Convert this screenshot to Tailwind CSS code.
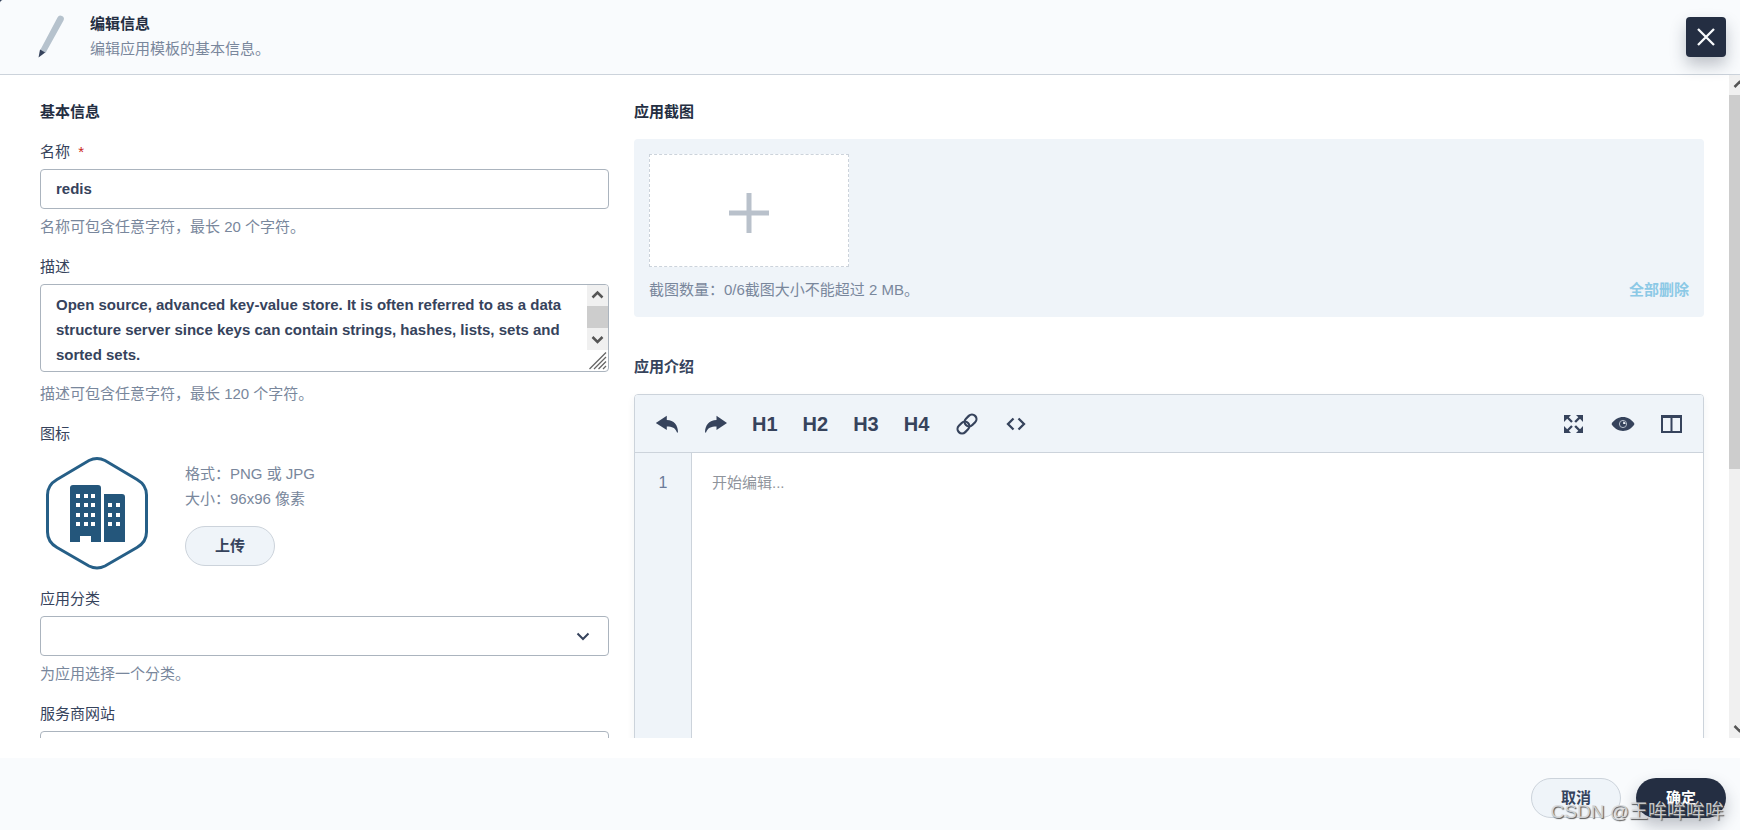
<!DOCTYPE html>
<html lang="zh-CN">
<head>
<meta charset="utf-8">
<meta name="viewport" content="width=device-width, initial-scale=1">
<title>编辑信息</title>
<script src="https://cdn.jsdelivr.net/npm/@tailwindcss/browser@4"></script>
</head>
<body class="bg-[#36435c]">
<div class="relative flex h-screen flex-col overflow-hidden rounded-tl-sm bg-white font-['Liberation_Sans','Noto_Sans_CJK_SC',sans-serif] text-[15px] leading-[25px] text-[#36435c]">

  <header class="z-10 flex shrink-0 items-center justify-between border-b border-[#ccd3db] bg-[#f9fbfd] pt-[11px] pb-[11px] pr-[14px] pl-[30px]">
    <div class="flex items-center gap-[10px]">
      <svg class="size-[50px]" viewBox="0 0 50 50" aria-hidden="true">
        <path d="M27.500 5.500A3 3 0 0 1 33.500 8.500L15.500 41L10 38.500Z" fill="#b6c2cd"/>
        <path d="M10 37.500L15.200 40.500L8.500 45.500Z" fill="#36435c"/>
      </svg>
      <div class="pb-0.5">
        <h1 class="font-bold text-[#242e42]">编辑信息</h1>
        <p class="text-[#79879c]">编辑应用模板的基本信息。</p>
      </div>
    </div>
    <button type="button" aria-label="关闭" class="flex size-10 items-center justify-center rounded bg-[#242e42] shadow-[0_8px_16px_0_rgba(35,45,65,0.28)]">
      <svg class="size-5" viewBox="0 0 20 20" fill="none" stroke="#f9fbfd" stroke-width="2.300" aria-hidden="true"><path d="M2 2L18 18M18 2L2 18"/></svg>
    </button>
  </header>

  <main class="relative mb-5 flex min-h-0 flex-1 gap-[25px] overflow-hidden pt-6 pr-9 pl-10">
    <section class="flex w-[569px] shrink-0 flex-col">
      <h2 class="mb-[15px] font-bold text-[#242e42]">基本信息</h2>

      <div class="mb-[15px] flex flex-col">
        <label for="name" class="mb-[5px]">名称 <span class="ml-1 text-[#ca2621]">*</span></label>
        <input id="name" type="text" value="redis" class="h-10 rounded border border-[#abb4be] bg-white px-[15px] pb-0.5 font-bold">
        <p class="mt-[5px] text-[#79879c]">名称可包含任意字符，最长 20 个字符。</p>
      </div>

      <div class="mb-[15px] flex flex-col">
        <label for="desc" class="mb-[5px]">描述</label>
        <div class="relative flex">
          <textarea id="desc" class="h-[88px] w-full resize-none overflow-hidden rounded border border-[#abb4be] bg-white py-[7px] pr-9 pl-[15px] font-bold">Open source, advanced key-value store. It is often referred to as a data structure server since keys can contain strings, hashes, lists, sets and sorted sets.</textarea>
          <svg class="absolute top-px right-px h-[86px] w-[21px]" viewBox="0 0 21 86" fill="none" aria-hidden="true">
            <path d="M0 0H18Q21 0 21 3V65H0Z" fill="#f0f0f0"/>
            <path d="M0 21H21V43H0Z" fill="#cdcdcd"/>
            <path d="M5.500 12.500L10.500 7.500L15.500 12.500M5.500 52L10.500 57L15.500 52" stroke="#555" stroke-width="2.500"/>
            <path d="M2.500 84L19 67.500M7 84L19 72M11.500 84L19 76.500M16 84L19 81" stroke="#666" stroke-width="1.300"/>
          </svg>
        </div>
        <p class="mt-[9px] text-[#79879c]">描述可包含任意字符，最长 120 个字符。</p>
      </div>

      <div class="mb-[10px] flex flex-col">
        <p class="mb-[5px]">图标</p>
        <div class="flex items-start gap-[30px]">
          <svg class="h-[125px] w-[115px]" viewBox="0 0 115 125" aria-hidden="true">
            <path d="M49 9.500Q57 5.500 65 9.500L97 28.500Q106.500 34 106.500 44V81Q106.500 91 97 96.500L65 115Q57 119 49 115L17 96.500Q7.500 91 7.500 81V44Q7.500 34 17 28.500Z" fill="none" stroke="#265f87" stroke-width="3"/>
            <g transform="translate(0 1)">
              <path d="M30 36Q30 33 33 33H58Q61 33 61 36V90H51V84H40V90H30ZM64 42H82Q85 42 85 45V90H64Z" fill="#24567b"/>
              <path d="M36 42h4v4h-4zM44 42h4v4h-4zM51 42h4v4h-4zM36 51h4v4h-4zM44 51h4v4h-4zM51 51h4v4h-4zM36 61h4v4h-4zM44 61h4v4h-4zM51 61h4v4h-4zM36 70h4v4h-4zM44 70h4v4h-4zM51 70h4v4h-4zM68 51h4v4h-4zM76 51h4v4h-4zM68 61h4v4h-4zM76 61h4v4h-4zM68 70h4v4h-4zM76 70h4v4h-4z" fill="#fff"/>
            </g>
          </svg>
          <div class="flex flex-col items-start pt-[10px]">
            <p class="text-[#79879c]">格式：PNG 或 JPG</p>
            <p class="text-[#79879c]">大小：96x96 像素</p>
            <button type="button" class="mt-[15px] h-10 w-[90px] rounded-full border border-[#ccd3db] bg-[#eff4f9] pb-0.5 font-bold">上传</button>
          </div>
        </div>
      </div>

      <div class="mb-[15px] flex flex-col">
        <label for="category" class="mb-[5px]">应用分类</label>
        <div class="relative flex">
          <select id="category" class="h-10 w-full appearance-none rounded border border-[#abb4be] bg-white px-[15px]"><option></option></select>
          <svg class="pointer-events-none absolute top-[10px] right-4 size-5" viewBox="0 0 20 20" fill="none" stroke="#36435c" stroke-width="2" aria-hidden="true"><path d="M4.500 7.500L10 13L15.500 7.500"/></svg>
        </div>
        <p class="mt-[5px] text-[#79879c]">为应用选择一个分类。</p>
      </div>

      <div class="flex flex-col">
        <label for="site" class="mb-[5px]">服务商网站</label>
        <input id="site" type="text" class="h-10 shrink-0 rounded border border-[#abb4be] bg-white px-[15px]">
      </div>
    </section>

    <section class="flex min-w-0 flex-1 flex-col">
      <h2 class="mb-[15px] font-bold text-[#242e42]">应用截图</h2>
      <div class="rounded bg-[#eff4f9] p-[15px]">
        <button type="button" aria-label="添加截图" class="flex h-[113px] w-[200px] items-center justify-center border border-dashed border-[#ccd3db] bg-white">
          <svg class="mt-1 size-10" viewBox="0 0 40 40" stroke="#b9c1cb" stroke-width="5" aria-hidden="true"><path d="M20 0V40M0 20H40"/></svg>
        </button>
        <div class="mt-[10px] flex items-center justify-between">
          <p class="text-[#79879c]">截图数量：0/6截图大小不能超过 2 MB。</p>
          <button type="button" class="font-bold text-[#8cc9e6]">全部删除</button>
        </div>
      </div>

      <h2 class="mt-[37px] mb-[15px] font-bold">应用介绍</h2>
      <div class="flex h-[500px] shrink-0 flex-col overflow-hidden rounded border border-[#ccd3db] shadow-[0_4px_8px_0_rgba(36,46,66,0.06)]">
        <div class="flex h-[58px] shrink-0 items-center justify-between border-b border-[#ccd3db] bg-[#eff4f9] px-[19px] text-xl font-bold">
          <div class="flex items-center gap-[25px]">
            <button type="button" aria-label="撤销"><svg class="size-6" viewBox="0 0 24 24" fill="#36435c" aria-hidden="true"><path d="M1.800 11L12.800 3.800V8C20 8 24 13 24 20.500H23C21.500 16 18 14.500 12.800 14.500V18Z"/></svg></button>
            <button type="button" aria-label="重做"><svg class="size-6" viewBox="0 0 24 24" fill="#36435c" aria-hidden="true"><path d="M24 11L13.500 3.800V8C6.300 8 2 13 2 20.500H3C4.500 16 8 14.500 13.500 14.500V18Z"/></svg></button>
            <button type="button">H1</button>
            <button type="button">H2</button>
            <button type="button">H3</button>
            <button type="button">H4</button>
            <button type="button" aria-label="链接"><svg class="size-6" viewBox="0 0 24 24" fill="none" stroke="#36435c" stroke-width="2.200" aria-hidden="true"><g transform="rotate(-45 13 12)"><rect x="1.500" y="7.500" width="13" height="9" rx="4.500"/><rect x="11.500" y="7.500" width="13" height="9" rx="4.500"/></g></svg></button>
            <button type="button" aria-label="代码"><svg class="size-6" viewBox="0 0 24 24" fill="none" stroke="#36435c" stroke-width="2.300" aria-hidden="true"><path d="M10.500 6.500L5 12L10.500 17.500M15.500 6.500L21 12L15.500 17.500"/></svg></button>
          </div>
          <div class="flex items-center gap-[25px]">
            <button type="button" aria-label="全屏"><svg class="size-6" viewBox="0 0 24 24" fill="#36435c" aria-hidden="true"><path d="M2 3H9L6.800 5.200L10.800 9.200L9.200 10.800L5.200 6.800L2 10ZM21 3V10L18 6.800L14 10.800L12.300 9.200L16.300 5.200L14 3ZM2 21V14L5.200 17.200L9.200 13.200L10.800 14.800L6.800 18.800L9 21ZM21 21H14L16.300 18.800L12.300 14.800L14 13.200L18 17.200L21 14Z"/></svg></button>
            <button type="button" aria-label="预览"><svg class="size-6" viewBox="0 0 24 24" aria-hidden="true"><path d="M.5 12C6 2.700 18 2.700 23.500 12C18 21.300 6 21.300 .5 12Z" fill="#36435c"/><circle cx="12" cy="12" r="3.600" fill="none" stroke="#b4bdc9" stroke-width="1"/><path d="M12.200 9.500A2.600 2.600 0 0 1 14.600 12H12.200Z" fill="#eff4f9"/></svg></button>
            <button type="button" aria-label="分栏"><svg class="size-6" viewBox="0 0 24 24" fill="none" stroke="#36435c" stroke-width="2" aria-hidden="true"><path d="M2 4V20H21V4M11.500 5V20"/><path d="M1 4.500H22" stroke-width="3"/></svg></button>
          </div>
        </div>
        <div class="flex flex-1">
          <div class="w-[57px] shrink-0 border-r border-[#ccd3db] bg-[#eff4f9] pt-[17px] text-center text-base leading-[25px] text-[#6b7a99]">1</div>
          <textarea aria-label="应用介绍" placeholder="开始编辑..." class="min-w-0 flex-1 resize-none bg-white px-5 pt-[17px] placeholder:text-[#8f949c]"></textarea>
        </div>
      </div>
    </section>

    <div class="absolute top-0 right-0 flex h-full w-[11px] flex-col overflow-hidden bg-[#f0f0f0]" aria-hidden="true">
      <svg class="h-5 w-[21px] shrink-0" viewBox="0 0 21 20" fill="none" stroke="#555" stroke-width="2.500"><path d="M5.500 12L10.500 7L15.500 12"/></svg>
      <div class="h-[374px] bg-[#cdcdcd]"></div>
      <svg class="mt-auto h-5 w-[21px] shrink-0" viewBox="0 0 21 20" fill="none" stroke="#555" stroke-width="2.500"><path d="M5.500 8L10.500 13L15.500 8"/></svg>
    </div>
  </main>

  <footer class="flex shrink-0 justify-end gap-[15px] bg-[#f9fbfd] pt-5 pr-[14px] pb-3">
    <button type="button" class="h-10 w-[90px] rounded-full border border-[#ccd3db] bg-[#eff4f9] pb-0.5 font-bold">取消</button>
    <button type="button" class="h-10 w-[90px] rounded-full bg-[#242e42] pb-0.5 font-bold text-white shadow-[0_8px_16px_0_rgba(35,45,65,0.28)]">确定</button>
  </footer>

  <p class="pointer-events-none absolute right-4 bottom-[6px] text-[19px] text-[#d9dadc]/90 [text-shadow:1px_1px_1px_#555]">CSDN @王哞哞哞哞</p>
</div>
</body>
</html>
